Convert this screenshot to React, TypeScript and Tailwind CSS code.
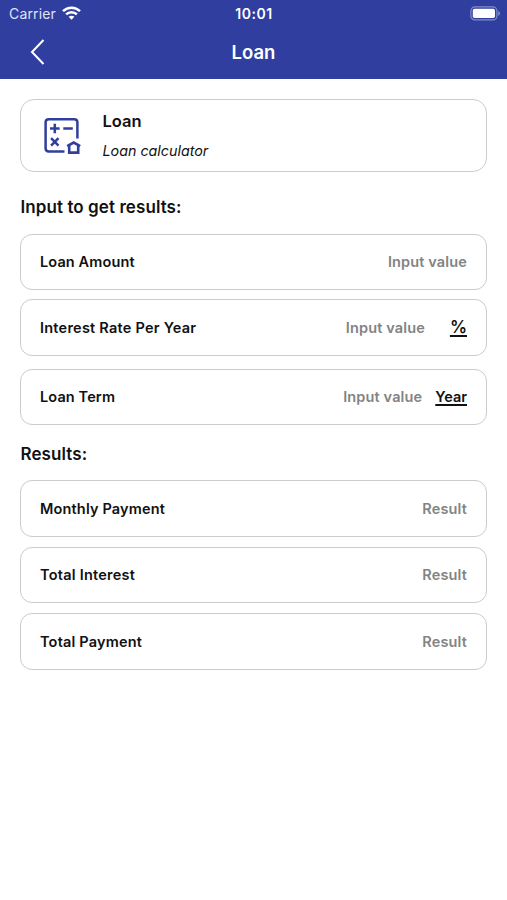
import React from 'react';

interface FieldProps {
  label: string;
  value: string;
  unit?: string;
  labelClassName?: string;
  unitClassName?: string;
  className?: string;
}

const WifiIcon: React.FC = () => (
  <svg width="19" height="14" viewBox="0 0 19 14" fill="none" stroke="white" strokeWidth="2.5" className="ml-1.5 -mt-0.5">
    <path d="M1 5.1 C5.8 0.5 13.2 0.5 18 5.1" />
    <path d="M4.1 8.4 C7.1 5.5 11.9 5.5 14.9 8.4" />
    <path d="M9.5 13.8 L6.6 10.8 C8.2 9.3 10.8 9.3 12.4 10.8 Z" fill="white" stroke="none" />
  </svg>
);

const BatteryIcon: React.FC = () => (
  <svg width="31" height="15" viewBox="0 0 31 15" fill="none" className="-mt-px">
    <rect x="0.9" y="0.9" width="26" height="13" rx="4" stroke="#838dcb" strokeWidth="1.2" />
    <rect x="2.8" y="2.8" width="22.2" height="9.2" rx="1.8" fill="white" />
    <path d="M28.2 5 C30.6 5.8 30.6 9 28.2 9.8 Z" fill="#838dcb" />
  </svg>
);

const LoanIcon: React.FC = () => (
  <svg width="40" height="40" viewBox="0 0 40 40" fill="none" stroke="#303f9f" strokeWidth="2.5" className="mt-0.5">
    <path d="M34.4 21.5 V5.3 Q34.4 2.2 31.2 2.2 H5.8 Q2.6 2.2 2.6 5.3 V31.2 Q2.6 34.4 5.8 34.4 H21.5" />
    <path d="M7 11.5 H16.6 M11.8 6.7 V16.3 M20.3 11.5 H29.8" />
    <path d="M8.1 21.2 L15.5 28.6 M15.5 21.2 L8.1 28.6" />
    <path d="M24.2 29.2 L30.7 25.5 L37.2 29.2 M26.2 28.2 V35.6 H35.2 V28.2" strokeWidth="2.6" />
  </svg>
);

const Field: React.FC<FieldProps> = ({
  label,
  value,
  unit,
  labelClassName = 'tracking-[0.12px]',
  unitClassName = '',
  className = 'h-14',
}) => (
  <div className={`flex items-center rounded-[12px] border border-[#cbcbcb] px-[19px] text-[14.5px] font-semibold ${className}`}>
    <span className={`flex-1 text-[#111] ${labelClassName}`}>{label}</span>
    <span className="tracking-[0.14px] text-[#838383]">{value}</span>
    {unit && (
      <span className={`text-right text-[#111] underline decoration-[1.5px] underline-offset-2 ${unitClassName}`}>{unit}</span>
    )}
  </div>
);

const App: React.FC = () => {
  return (
    <div className="min-h-[900px] bg-white font-['Inter',sans-serif] text-[#111]">
      <header className="h-[79px] bg-[#303f9f] text-white">
        <div className="grid h-[27px] grid-cols-3 items-center pl-[9px] pr-[6px]">
          <div className="flex items-center text-[14px] tracking-[0.15px] text-[#dfe3f8]">
            Carrier
            <WifiIcon />
          </div>
          <div className="pr-0.5 text-center text-[14px] font-semibold tracking-[0.5px]">10:01</div>
          <div className="flex justify-end">
            <BatteryIcon />
          </div>
        </div>
        <div className="grid h-[50px] grid-cols-3 items-center">
          <button className="pl-[30px]" aria-label="Back">
            <svg width="15" height="26" viewBox="0 0 15 26" fill="none" stroke="white" strokeWidth="2">
              <path d="M13.5 1 L2 13 L13.5 25" />
            </svg>
          </button>
          <h1 className="pt-px text-center text-[18.5px] font-semibold">Loan</h1>
        </div>
      </header>

      <main className="px-5 pt-5">
        <div className="flex h-[73px] items-center rounded-[14px] border border-[#cbcbcb] pl-[22px]">
          <LoanIcon />
          <div className="ml-[19.5px]">
            <h2 className="text-[16.5px] leading-[24px] font-semibold">Loan</h2>
            <p className="mt-[7px] text-[14.3px] leading-[22px] italic">Loan calculator</p>
          </div>
        </div>

        <h3 className="mt-[23px] pl-[0.5px] text-[17px] leading-[24px] font-semibold tracking-[0.08px]">Input to get results:</h3>
        <Field className="mt-[15px] h-14" label="Loan Amount" value="Input value" />
        <Field
          className="mt-[9px] h-[57px]"
          label="Interest Rate Per Year"
          labelClassName="tracking-[0.24px]"
          value="Input value"
          unit="%"
          unitClassName="ml-[25px] text-[17px]"
        />
        <Field className="mt-[13px] h-14" label="Loan Term" value="Input value" unit="Year" unitClassName="ml-[13px]" />

        <h3 className="mt-[17px] pl-[0.5px] text-[17px] leading-[24px] font-semibold tracking-[0.08px]">Results:</h3>
        <Field className="mt-3.5 h-[57px]" label="Monthly Payment" labelClassName="tracking-[0.16px]" value="Result" />
        <Field className="mt-2.5 h-14" label="Total Interest" labelClassName="tracking-[0.24px]" value="Result" />
        <Field className="mt-2.5 h-[57px]" label="Total Payment" labelClassName="tracking-[0.18px]" value="Result" />
      </main>
    </div>
  );
};

export default App;
